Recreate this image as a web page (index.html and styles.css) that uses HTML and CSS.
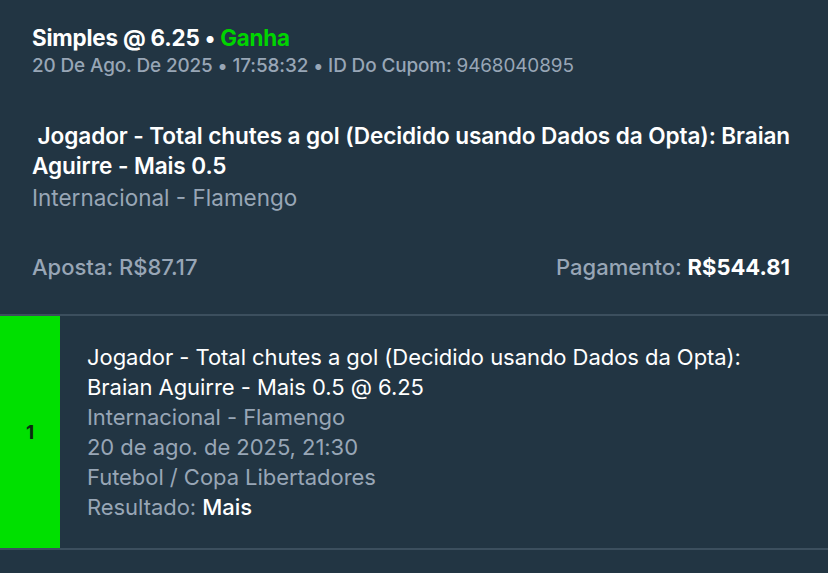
FILE: index.html
```html
<!DOCTYPE html>
<html>
<head>
<meta charset="utf-8">
<link rel="stylesheet" href="styles.css">
</head>
<body>
<div class="page">
  <section class="summary">
    <div class="title">Simples @ 6.25 • <span class="won">Ganha</span></div>
    <div class="meta">20 De Ago. De 2025 • 17:58:32 • ID Do Cupom: <span class="light">9468040895</span></div>
    <div class="selection">&nbsp;Jogador - Total chutes a gol (Decidido usando Dados da Opta): Braian Aguirre - Mais 0.5</div>
    <div class="event">Internacional - Flamengo</div>
    <div class="amounts">
      <div class="muted">Aposta: R$87.17</div>
      <div class="muted">Pagamento: <span class="strong">R$544.81</span></div>
    </div>
  </section>
  <section class="leg">
    <div class="leg-num">1</div>
    <div class="leg-body">
      <div class="white">Jogador - Total chutes a gol (Decidido usando Dados da Opta): Braian Aguirre - Mais 0.5 @ 6.25</div>
      <div class="muted">Internacional - Flamengo</div>
      <div class="muted">20 de ago. de 2025, 21:30</div>
      <div class="muted">Futebol / Copa Libertadores</div>
      <div class="muted">Resultado: <span class="white">Mais</span></div>
    </div>
  </section>
</div>
</body>
</html>
```
FILE: styles.css
```css
html, body {
  margin: 0;
  padding: 0;
  background: #223543;
}
body {
  font-family: Inter, "Noto Sans", sans-serif;
  color: #ffffff;
  width: 828px;
  height: 573px;
  overflow: hidden;
}
.summary {
  padding: 24px 30px 0 32px;
  height: 290px;
  border-bottom: 2px solid #3c4f5e;
}
.title {
  font-size: 22.4px;
  font-weight: 700;
  line-height: 28px;
  letter-spacing: -0.2px;
}
.won {
  color: #00d400;
}
.meta {
  font-size: 18.9px;
  line-height: 22px;
  color: #98a6b6;
  font-weight: 500;
  margin-top: 3px;
  letter-spacing: -0.1px;
}
.meta .light {
  font-weight: 400;
}
.selection {
  margin-top: 44px;
  font-size: 22.6px;
  font-weight: 600;
  line-height: 30px;
  letter-spacing: -0.1px;
}
.event {
  margin-top: 2px;
  font-size: 22.5px;
  line-height: 30px;
  color: #98a6b6;
}
.amounts {
  margin-top: 39px;
  padding-right: 8px;
  display: flex;
  justify-content: space-between;
  font-size: 22px;
  line-height: 30px;
}
.muted {
  color: #98a6b6;
  font-weight: 500;
}
.strong {
  color: #fff;
  font-weight: 700;
}
.white {
  color: #fff;
  font-weight: 400;
}
.leg {
  display: flex;
  height: 232px;
  border-bottom: 2px solid #3c4f5e;
}
.leg-num {
  width: 60px;
  flex: none;
  background: #00e000;
  color: #0b2a12;
  font-weight: 700;
  font-size: 19px;
  display: flex;
  align-items: center;
  justify-content: center;
}
.leg-body {
  padding: 26px 70px 0 27px;
  font-size: 22px;
  line-height: 30px;
  letter-spacing: -0.05px;
}
.leg-body .muted {
  font-weight: 400;
}
.leg-body .muted .white {
  font-weight: 500;
}
```
